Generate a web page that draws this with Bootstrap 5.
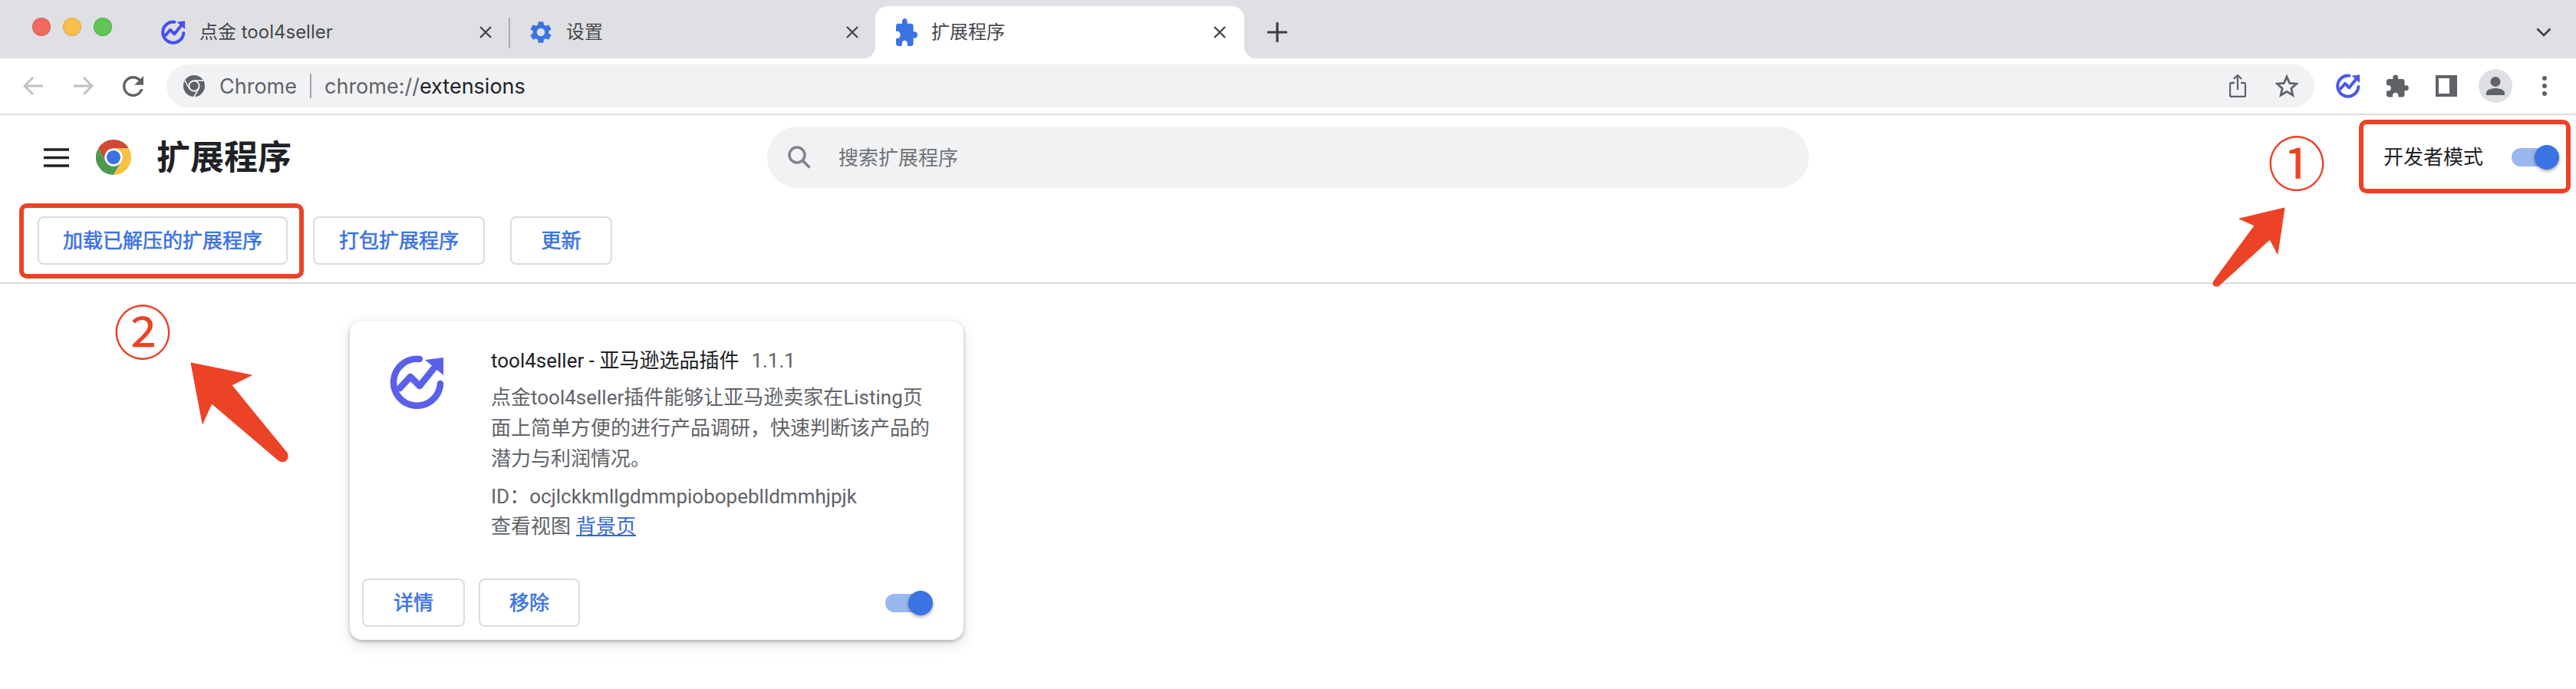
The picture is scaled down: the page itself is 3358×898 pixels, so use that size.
<!DOCTYPE html>
<html lang="zh-CN">
<head>
<meta charset="utf-8">
<title>扩展程序</title>
<link rel="stylesheet" href="https://cdn.jsdelivr.net/npm/bootstrap@5.3.0/dist/css/bootstrap.min.css">
<style>
html,body{margin:0;background:#fff}
body{width:3358px;height:898px;overflow:hidden;position:relative;font-family:Roboto,"Noto Sans CJK SC",sans-serif;font-size:26px;line-height:40px;color:#5f6368}
svg{display:block;flex:none}
.strip{height:76px;background:#dfe0e4}
.lights{width:190px;padding:23px 0 0 42px;gap:16px}
.light{width:24px;height:24px;border-radius:50%;border:1px solid rgba(0,0,0,.12)}
.l-r{background:#f26a5e}.l-y{background:#f7bf4f}.l-g{background:#5fc553}
.tabx{height:68px;margin-top:8px;font-family:Inter,"Noto Sans CJK SC",sans-serif;font-size:24px;color:#45474a;line-height:1;position:relative}
.tab-a{width:475px;padding:0 24px 0 20px}
.tab-b{width:476px;padding:0 22px 0 25px}
.tab-c{width:481px;padding:0 24px 0 27px;background:#fff;border-radius:16px 16px 0 0}
.tab-c::before,.tab-c::after{content:"";position:absolute;bottom:0;width:16px;height:16px}
.tab-c::before{left:-16px;background:radial-gradient(circle at 0 0,transparent 16px,#fff 16.5px)}
.tab-c::after{right:-16px;background:radial-gradient(circle at 100% 0,transparent 16px,#fff 16.5px)}
.tab-sep{position:absolute;right:0;top:15px;height:40px;width:2px;background:#a9abb0}
.tab-label{margin-left:18px}
.tab-close{margin-left:auto}
.plus-slot{margin:8px 0 0 30px;height:68px}
.chev-slot{margin:8px 32px 0 auto;height:68px}
.bar{height:74px;border-bottom:2px solid #dcdcdc;padding-left:30px}
.navs{gap:38px}
.omni{width:2800px;height:56px;margin-left:30px;background:#f1f2f4;border-radius:28px;padding:0 21px 0 22px;font-family:Inter,"Noto Sans CJK SC",sans-serif;font-size:27px;line-height:1}
.omni-sep{width:2px;height:32px;background:#a0a3a8;margin:0 17px 0 17px}
.host{margin-left:19px;color:#5f6368}
.url b{font-weight:400;color:#202124}
.omni-r{margin-left:auto;gap:38px}
.i-ext{margin-left:28px}.i-puz{margin-left:34px}.i-side{margin-left:35px}.i-ava{margin-left:28px}.i-dot{margin-left:39px}
.avatar{width:44px;height:44px;border-radius:50%;background:#dfe0e4}
.headrow{height:110px;padding:0 22px 0 57px}
.headleft{width:943px;gap:35px}
.pagetitle{font-size:44px;font-weight:700;line-height:1;color:#202124;margin:2px 0 0 -2px}
.searchbox{width:1358px;height:80px;border-radius:40px;background:#f1f2f4;padding-left:27px;color:#6f7377;line-height:1}
.searchbox span{margin:2px 0 0 36px}
.devlabel{color:#202124;margin-right:37px;line-height:1}
.toggle{display:block;width:62px;height:32px;position:relative;flex:none}
.toggle::before{content:"";position:absolute;left:0;right:2px;top:4px;height:24px;border-radius:12px;background:#9ab8ee}
.toggle::after{content:"";position:absolute;right:0;top:0;width:32px;height:32px;border-radius:50%;background:#3b73e2;box-shadow:0 2px 4px rgba(0,0,0,.35)}
.actions{height:110px;padding:22px 0 23px 49px;gap:33px;border-bottom:2px solid #dcdcdc}
.btn.cbtn{height:63px;padding:0;border:2px solid #dadce0;border-radius:8px;background:#fff;color:#3b73e2;font-size:26px;font-weight:400;-webkit-text-stroke:.6px #3b73e2;line-height:1;display:flex;align-items:center;justify-content:center}
.w-a{width:326px}.w-b{width:224px}.w-c{width:133px}.w-d{width:134px}.w-e{width:132px}
.extcard{width:800px;height:416px;margin:48px 0 0 456px;border:0;border-radius:16px;box-shadow:0 2px 4px rgba(60,64,67,.35),0 6px 18px rgba(60,64,67,.16)}
.extlogo{margin:44px 60px 0 52px}
.extinfo{padding-top:32px;width:580px}
.extname{color:#202124;font-size:26px;line-height:40px;font-weight:400;margin:0 0 8px}
.extname span{color:#5f6368;margin-left:16px}
.extdesc{margin:0 0 9px}
.extid{margin:0 0 -1px}
.extlink{color:#3367d6;text-decoration:underline;margin-left:7px}
.extfoot{margin-top:auto;padding:0 40px 17px 16px;gap:18px}
.anno{position:absolute;border:6px solid #ec4225;border-radius:10px}
.anno-a{left:25px;top:265px;width:371px;height:98px}
.anno-b{left:3075px;top:156px;width:276px;height:96px}
.numb{position:absolute;color:#ec4225;font-family:"Noto Sans CJK SC",sans-serif;font-size:76px;line-height:80px;width:80px;text-align:center}
.numb-a{left:2954px;top:169px}
.numb-b{left:146px;top:389px}
.arrows{position:absolute;left:0;top:0}
</style>
</head>
<body>
<div class="strip d-flex">
  <div class="lights d-flex align-items-start"><span class="light l-r"></span><span class="light l-y"></span><span class="light l-g"></span></div>
  <div class="tabx tab-a d-flex align-items-center">
    <svg width="32" height="32" viewBox="0 0 72 72"><g fill="none" stroke="#4650ee" stroke-width="9" stroke-linecap="round" stroke-linejoin="round"><path d="M39 6A30.500 30.500 0 1 0 66 38"/><path d="M14 44L27 29L39 41L60 15"/></g><path d="M46 6L70 3V27Z" fill="#4650ee"/></svg>
    <span class="tab-label">点金 tool4seller</span>
    <svg class="tab-close" width="16" height="16" viewBox="0 0 16 16"><path d="M1 1L15 15M15 1L1 15" stroke="#45474a" stroke-width="2.400"/></svg>
    <span class="tab-sep"></span>
  </div>
  <div class="tabx tab-b d-flex align-items-center">
    <svg width="30" height="30" viewBox="2 1.500 20 21"><path fill="#3b73e2" d="M19.14 12.94c.04-.3.06-.61.06-.94 0-.32-.02-.64-.07-.94l2.03-1.58a.49.49 0 0 0 .12-.61l-1.92-3.32a.488.488 0 0 0-.59-.22l-2.39.96c-.5-.38-1.03-.7-1.62-.94l-.36-2.54a.484.484 0 0 0-.48-.41h-3.84c-.24 0-.43.17-.47.41l-.36 2.54c-.59.24-1.13.57-1.62.94l-2.39-.96c-.22-.08-.47 0-.59.22L2.74 8.87c-.12.21-.08.47.12.61l2.03 1.58c-.05.3-.09.63-.09.94s.02.64.07.94l-2.03 1.58a.49.49 0 0 0-.12.61l1.92 3.32c.12.22.37.29.59.22l2.39-.96c.5.38 1.03.7 1.62.94l.36 2.54c.05.24.24.41.48.41h3.84c.24 0 .44-.17.47-.41l.36-2.54c.59-.24 1.13-.56 1.62-.94l2.39.96c.22.08.47 0 .59-.22l1.92-3.32c.12-.22.07-.47-.12-.61l-2.01-1.58zM12 15.6c-1.98 0-3.6-1.62-3.6-3.6s1.62-3.6 3.6-3.6 3.6 1.62 3.6 3.6-1.62 3.6-3.6 3.6z"/></svg>
    <span class="tab-label">设置</span>
    <svg class="tab-close" width="16" height="16" viewBox="0 0 16 16"><path d="M1 1L15 15M15 1L1 15" stroke="#45474a" stroke-width="2.400"/></svg>
  </div>
  <div class="tabx tab-c d-flex align-items-center">
    <svg width="28" height="36" viewBox="2 1 21 21" preserveAspectRatio="none"><path fill="#3b73e2" d="M20.500 11H19V7c0-1.100-.9-2-2-2h-4V3.500C13 2.120 11.880 1 10.500 1S8 2.120 8 3.500V5H4c-1.100 0-1.990.9-1.990 2v3.800H3.500c1.490 0 2.700 1.210 2.700 2.700s-1.210 2.700-2.700 2.700H2V20c0 1.100.9 2 2 2h3.800v-1.500c0-1.490 1.210-2.700 2.700-2.700 1.490 0 2.700 1.210 2.700 2.700V22H17c1.100 0 2-.9 2-2v-4h1.500c1.380 0 2.500-1.120 2.500-2.500S21.880 11 20.500 11z"/></svg>
    <span class="tab-label">扩展程序</span>
    <svg class="tab-close" width="16" height="16" viewBox="0 0 16 16"><path d="M1 1L15 15M15 1L1 15" stroke="#45474a" stroke-width="2.400"/></svg>
  </div>
  <div class="plus-slot d-flex align-items-center"><svg width="26" height="26" viewBox="0 0 26 26"><path d="M13 1V25M1 13H25" stroke="#3c3e42" stroke-width="3.200" stroke-linecap="round"/></svg></div>
  <div class="chev-slot d-flex align-items-center"><svg width="20" height="12" viewBox="0 0 20 12"><path d="M1.500 1.500L10 10L18.500 1.500" fill="none" stroke="#3c3e42" stroke-width="2.600"/></svg></div>
</div>

<div class="bar d-flex align-items-center">
  <div class="navs d-flex align-items-center">
    <svg width="27" height="26" viewBox="0 0 27 26"><path d="M26 13H2M13 2L2 13L13 24" fill="none" stroke="#bfc1c4" stroke-width="3"/></svg>
    <svg width="27" height="26" viewBox="0 0 27 26"><path d="M1 13H25M14 2L25 13L14 24" fill="none" stroke="#bfc1c4" stroke-width="3"/></svg>
    <svg width="27" height="27" viewBox="4 4 16 16"><path fill="#5f6368" d="M17.650 6.350A7.958 7.958 0 0 0 12 4c-4.420 0-7.990 3.580-7.990 8s3.570 8 7.990 8c3.730 0 6.840-2.550 7.730-6h-2.080A5.990 5.990 0 0 1 12 18c-3.310 0-6-2.690-6-6s2.690-6 6-6c1.660 0 3.140.69 4.220 1.780L13 11h7V4l-2.350 2.350z"/></svg>
  </div>
  <div class="omni d-flex align-items-center">
    <svg width="28" height="28" viewBox="0 0 48 48"><circle cx="24" cy="24" r="24" fill="#5f6368"/><circle cx="24" cy="24" r="11.500" fill="none" stroke="#fff" stroke-width="3"/><path d="M24 12H44.800M34.400 30L24 48M13.600 30L3.200 12" stroke="#fff" stroke-width="2.500"/></svg>
    <span class="host">Chrome</span>
    <span class="omni-sep"></span>
    <span class="url">chrome://<b>extensions</b></span>
    <div class="omni-r d-flex align-items-center">
      <svg width="22" height="30" viewBox="0 0 22 30"><path d="M7 11H3a2 2 0 0 0-2 2V27a2 2 0 0 0 2 2H19a2 2 0 0 0 2-2V13a2 2 0 0 0-2-2H15M11 20V2M6 6L11 1L16 6" fill="none" stroke="#5f6368" stroke-width="2.300"/></svg>
      <svg width="30" height="30" viewBox="0 0 30 30"><path d="M15 3L18.600 11.400L27.600 12.200L20.800 18.200L22.800 27L15 22.300L7.200 27L9.200 18.200L2.400 12.200L11.400 11.400Z" fill="none" stroke="#5f6368" stroke-width="2.800" stroke-linejoin="miter"/></svg>
    </div>
  </div>
  <svg class="i-ext" width="32" height="32" viewBox="0 0 72 72"><g fill="none" stroke="#4f58ea" stroke-width="9" stroke-linecap="round" stroke-linejoin="round"><path d="M39 6A30.500 30.500 0 1 0 66 38"/><path d="M14 44L27 29L39 41L60 15"/></g><path d="M46 6L70 3V27Z" fill="#4f58ea"/></svg>
  <svg class="i-puz" width="29" height="30" viewBox="2 1 21 21"><path fill="#5f6368" d="M20.500 11H19V7c0-1.100-.9-2-2-2h-4V3.500C13 2.120 11.880 1 10.500 1S8 2.120 8 3.500V5H4c-1.100 0-1.990.9-1.990 2v3.800H3.500c1.490 0 2.700 1.210 2.700 2.700s-1.210 2.700-2.700 2.700H2V20c0 1.100.9 2 2 2h3.800v-1.500c0-1.490 1.210-2.700 2.700-2.700 1.490 0 2.700 1.210 2.700 2.700V22H17c1.100 0 2-.9 2-2v-4h1.500c1.380 0 2.500-1.120 2.500-2.500S21.880 11 20.500 11z"/></svg>
  <svg class="i-side" width="28" height="28" viewBox="0 0 28 28"><path fill="#5f6368" fill-rule="evenodd" d="M0 0H28V28H0ZM4 4V24H18V4Z"/></svg>
  <div class="avatar i-ava d-flex align-items-center justify-content-center"><svg width="26" height="26" viewBox="0 0 26 26"><circle cx="13" cy="7.500" r="6.500" fill="#5f6368"/><path d="M1 25V22C1 18 8 16 13 16S25 18 25 22V25Z" fill="#5f6368"/></svg></div>
  <svg class="i-dot" width="6" height="26" viewBox="0 0 6 26"><circle cx="3" cy="3" r="3" fill="#5f6368"/><circle cx="3" cy="13" r="3" fill="#5f6368"/><circle cx="3" cy="23" r="3" fill="#5f6368"/></svg>
</div>

<header>
  <div class="headrow d-flex align-items-center">
    <div class="headleft d-flex align-items-center">
      <svg width="33" height="25" viewBox="0 0 33 25"><path d="M0 2H33M0 12.500H33M0 23H33" stroke="#202124" stroke-width="3.600"/></svg>
      <svg width="46" height="46" viewBox="0 0 48 48"><path fill="#d14836" d="M24 12H44.780A24 24 0 0 0 3.200 12L13.610 30A12 12 0 0 1 24 12Z"/><path fill="#4c9a4f" d="M13.610 30L3.200 12A24 24 0 0 0 24 48L34.390 30A12 12 0 0 1 13.610 30Z"/><path fill="#f5c242" d="M34.390 30L24 48A24 24 0 0 0 44.780 12H24A12 12 0 0 1 34.390 30Z"/><circle cx="24" cy="24" r="12" fill="#fff"/><circle cx="24" cy="24" r="9.500" fill="#3b73e2"/></svg>
      <h1 class="pagetitle">扩展程序</h1>
    </div>
    <div class="searchbox d-flex align-items-center">
      <svg width="30" height="30" viewBox="0 0 30 30"><circle cx="12" cy="12" r="10" fill="none" stroke="#808387" stroke-width="3.400"/><path d="M19 19L28.500 28.500" stroke="#808387" stroke-width="3.600"/></svg>
      <span>搜索扩展程序</span>
    </div>
    <div class="ms-auto d-flex align-items-center">
      <span class="devlabel">开发者模式</span>
      <span class="toggle"></span>
    </div>
  </div>
  <div class="actions d-flex">
    <button class="btn cbtn w-a" type="button">加载已解压的扩展程序</button>
    <button class="btn cbtn w-b" type="button">打包扩展程序</button>
    <button class="btn cbtn w-c" type="button">更新</button>
  </div>
</header>

<main>
  <div class="card extcard">
    <div class="d-flex">
      <svg class="extlogo" width="72" height="72" viewBox="0 0 72 72"><g fill="none" stroke="#5a60ea" stroke-width="8.500" stroke-linecap="round" stroke-linejoin="round"><path d="M39 6A30.500 30.500 0 1 0 66 38"/><path d="M13 44L27 29L39 41L60 15"/></g><path d="M46 7L70 4V27Z" fill="#5a60ea"/></svg>
      <div class="extinfo">
        <h2 class="extname">tool4seller - 亚马逊选品插件<span>1.1.1</span></h2>
        <p class="extdesc">点金tool4seller插件能够让亚马逊卖家在Listing页面上简单方便的进行产品调研，快速判断该产品的潜力与利润情况。</p>
        <p class="extid">ID：ocjlckkmllgdmmpiobopeblldmmhjpjk</p>
        <div>查看视图<a class="extlink" href="#">背景页</a></div>
      </div>
    </div>
    <div class="extfoot d-flex align-items-center">
      <button class="btn cbtn w-d" type="button">详情</button>
      <button class="btn cbtn w-e" type="button">移除</button>
      <span class="toggle ms-auto"></span>
    </div>
  </div>
</main>

<div class="anno anno-a"></div>
<div class="anno anno-b"></div>
<div class="numb numb-a">①</div>
<div class="numb numb-b">②</div>
<svg class="arrows" width="3358" height="898" viewBox="0 0 3358 898"><path fill="#ec4225" stroke="#ec4225" stroke-width="1" d="M2978 271L2919 285L2939 294L2886 366Q2883 372 2888 373Q2891 374 2894 371L2959 312L2969 331Z"/><path fill="#ec4225" stroke="#ec4225" stroke-width="1" d="M249 473L328 489L302 502L374 590Q377 597 372 601Q367 603 363 600L276 526L264 552Z"/></svg>
<script src="https://cdn.jsdelivr.net/npm/bootstrap@5.3.0/dist/js/bootstrap.bundle.min.js"></script>
</body>
</html>
